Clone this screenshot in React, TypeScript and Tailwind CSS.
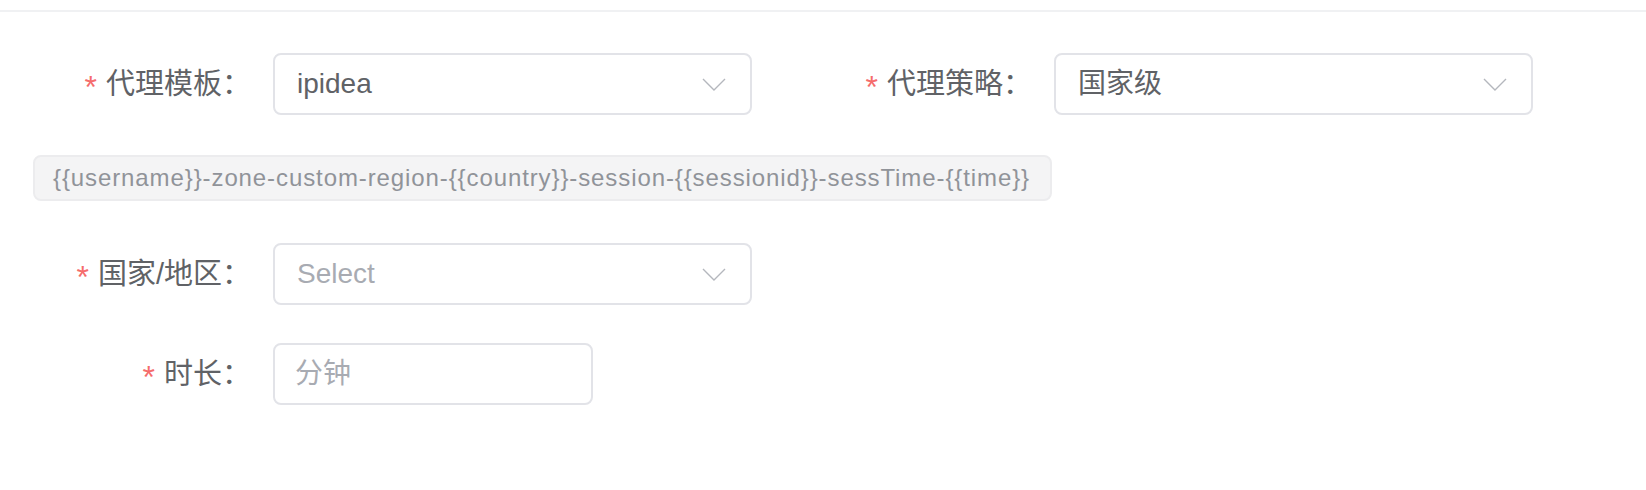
import React from "react";

const FONT = "font-['Liberation_Sans','Noto_Sans_CJK_SC',sans-serif]";

function Chevron() {
  return (
    <svg width="24" height="13" viewBox="0 0 24 13" fill="none" className="shrink-0">
      <path d="M1 1 L12 12 L23 1" stroke="#b4b7bd" strokeWidth="1.4" />
    </svg>
  );
}

function Label({ text }: { text: string }) {
  return (
    <div className="w-[240px] shrink-0 flex justify-end items-center pr-[22px]">
      <span className="text-[#f56c6c] text-[32px] mr-[9px] leading-none translate-y-[3px]">*</span>
      <span className="text-[#606266] text-[29px] leading-none">{text}</span>
    </div>
  );
}

function SelectBox({
  value,
  placeholder,
  width = "w-[479px]",
}: {
  value?: string;
  placeholder?: string;
  width?: string;
}) {
  return (
    <div
      className={`${width} h-[62px] rounded-[8px] border-2 border-[#e2e3e8] bg-white flex items-center justify-between pl-[22px] pr-[24px]`}
    >
      {value ? (
        <span className="text-[#606266] text-[28px] leading-none">{value}</span>
      ) : (
        <span className="text-[#a8abb2] text-[28px] leading-none">{placeholder}</span>
      )}
      <Chevron />
    </div>
  );
}

export default function App() {
  return (
    <div className={`w-[1646px] h-[490px] bg-white ${FONT}`}>
      <div className="h-[12px] border-b-2 border-[#f0f1f3]" />

      <div className="pl-[33px] pt-[41px]">
        {/* row 1 */}
        <div className="flex">
          <div className="flex w-[781px]">
            <Label text="代理模板：" />
            <SelectBox value="ipidea" />
          </div>
          <div className="flex">
            <Label text="代理策略：" />
            <SelectBox value="国家级" />
          </div>
        </div>

        {/* template tag */}
        <div className="mt-[40px] w-[1019px] h-[46px] rounded-[8px] border-2 border-[#ececee] bg-[#f4f4f5] flex items-center px-[18px]">
          <span className="text-[#909399] text-[24px] leading-none tracking-[0.9px] whitespace-nowrap">
            {"{{username}}-zone-custom-region-{{country}}-session-{{sessionid}}-sessTime-{{time}}"}
          </span>
        </div>

        {/* row 3 */}
        <div className="mt-[42px] flex">
          <Label text="国家/地区：" />
          <SelectBox placeholder="Select" />
        </div>

        {/* row 4 */}
        <div className="mt-[38px] flex">
          <Label text="时长：" />
          <div className="w-[320px] h-[62px] rounded-[8px] border-2 border-[#e2e3e8] bg-white flex items-center pl-[20px]">
            <span className="text-[#a8abb2] text-[28px] leading-none">分钟</span>
          </div>
        </div>
      </div>
    </div>
  );
}
